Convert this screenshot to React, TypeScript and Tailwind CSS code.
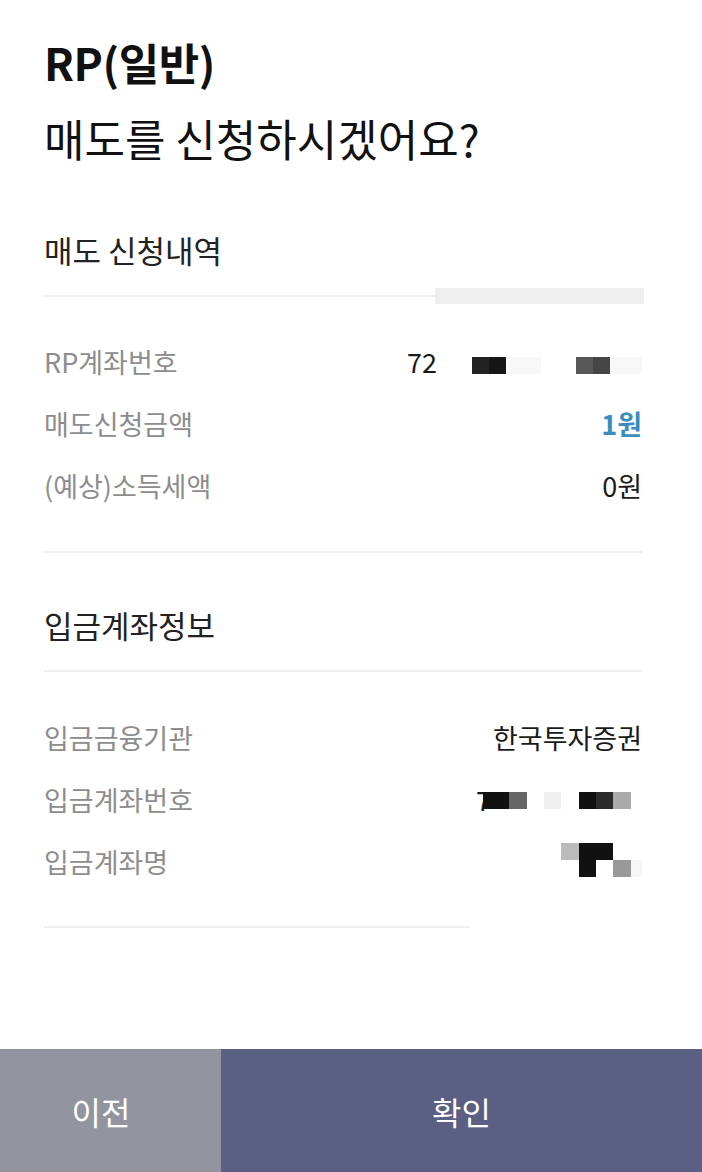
import React from 'react';

const font = { fontFamily: '"Noto Sans CJK KR", "Noto Sans", sans-serif' };

function Row({ label, children }: { label: string; children: React.ReactNode }) {
  return (
    <div className="flex items-center justify-between h-[62px]">
      <span className="text-[27px] leading-[32px] text-[#8d8d8d]">{label}</span>
      <div className="flex items-center">{children}</div>
    </div>
  );
}

function Divider({ className = '' }: { className?: string }) {
  return <div className={`h-[2px] bg-[#f0f0f0] ${className}`}></div>;
}

export default function App() {
  return (
    <div className="w-[702px] h-[1172px] bg-white flex flex-col" style={font}>
      <div className="flex-1 pl-[44px] pr-[60px]">
        {/* Header */}
        <h1 className="pt-[39px] text-[44px] leading-[46px] font-bold text-[#111] tracking-[-0.01em]">RP(일반)</h1>
        <h2 className="mt-[30px] text-[44px] leading-[46px] text-[#111]">매도를 신청하시겠어요?</h2>

        {/* 매도 신청내역 */}
        <h3 className="mt-[70px] text-[31px] leading-[38px] text-[#222]">매도 신청내역</h3>
        <div className="mt-[19px] flex items-center h-[16px]">
          <div className="flex-1 h-[2px] bg-[#f0f0f0]"></div>
          <div className="w-[209px] h-[16px] bg-[#efefef] -mr-[2px]"></div>
        </div>

        <div className="mt-[27px]">
          <Row label="RP계좌번호">
            <span className="text-[27px] leading-[32px] text-[#1a1a1a]">72</span>
            <div className="flex mt-[7px] ml-[35px]">
              <div className="w-[17px] h-[17px] bg-[#222]"></div>
              <div className="w-[17px] h-[17px] bg-[#161616]"></div>
              <div className="w-[35px] h-[17px] bg-[#f8f8f8]"></div>
              <div className="w-[35px] h-[17px]"></div>
              <div className="w-[17px] h-[17px] bg-[#575757]"></div>
              <div className="w-[17px] h-[17px] bg-[#454545]"></div>
              <div className="w-[32px] h-[17px] bg-[#f8f8f8]"></div>
            </div>
          </Row>
          <Row label="매도신청금액">
            <span className="text-[27px] leading-[32px] font-bold text-[#3b8dbf]">1원</span>
          </Row>
          <Row label="(예상)소득세액">
            <span className="text-[27px] leading-[32px] text-[#1a1a1a]">0원</span>
          </Row>
        </div>

        <Divider className="mt-[34px]" />

        {/* 입금계좌정보 */}
        <h3 className="mt-[53px] text-[31px] leading-[38px] text-[#222]">입금계좌정보</h3>
        <Divider className="mt-[26px]" />

        <div className="mt-[35px]">
          <Row label="입금금융기관">
            <span className="text-[27px] leading-[32px] text-[#1a1a1a]">한국투자증권</span>
          </Row>
          <Row label="입금계좌번호">
            <span className="text-[27px] leading-[32px] text-[#1a1a1a]">7</span>
            <div className="flex -ml-[8px]">
              <div className="w-[26px] h-[17px] bg-[#111]"></div>
              <div className="w-[18px] h-[17px] bg-[#666]"></div>
              <div className="w-[17px] h-[17px]"></div>
              <div className="w-[17px] h-[17px] bg-[#efefef]"></div>
              <div className="w-[18px] h-[17px]"></div>
              <div className="w-[17px] h-[17px] bg-[#111]"></div>
              <div className="w-[17px] h-[17px] bg-[#2b2b2b]"></div>
              <div className="w-[18px] h-[17px] bg-[#aaa]"></div>
              <div className="w-[11px] h-[17px]"></div>
            </div>
          </Row>
          <Row label="입금계좌명">
            <div className="grid grid-cols-[18px_17px_17px_18px_11px] grid-rows-[17px_17px] mt-[-4px]">
              <div className="bg-[#bbb]"></div>
              <div className="bg-[#111]"></div>
              <div className="bg-[#111]"></div>
              <div></div>
              <div></div>
              <div></div>
              <div className="bg-[#111]"></div>
              <div></div>
              <div className="bg-[#999]"></div>
              <div className="bg-[#f6f6f6]"></div>
            </div>
          </Row>
        </div>

        <Divider className="mt-[33px] w-[426px]" />
      </div>

      {/* Bottom buttons */}
      <div className="flex h-[123px]">
        <button className="w-[221px] pr-[19px] bg-[#92959f] text-white text-[32px] leading-[38px]">이전</button>
        <button className="flex-1 bg-[#5c5f84] text-white text-[32px] leading-[38px]">확인</button>
      </div>
    </div>
  );
}
